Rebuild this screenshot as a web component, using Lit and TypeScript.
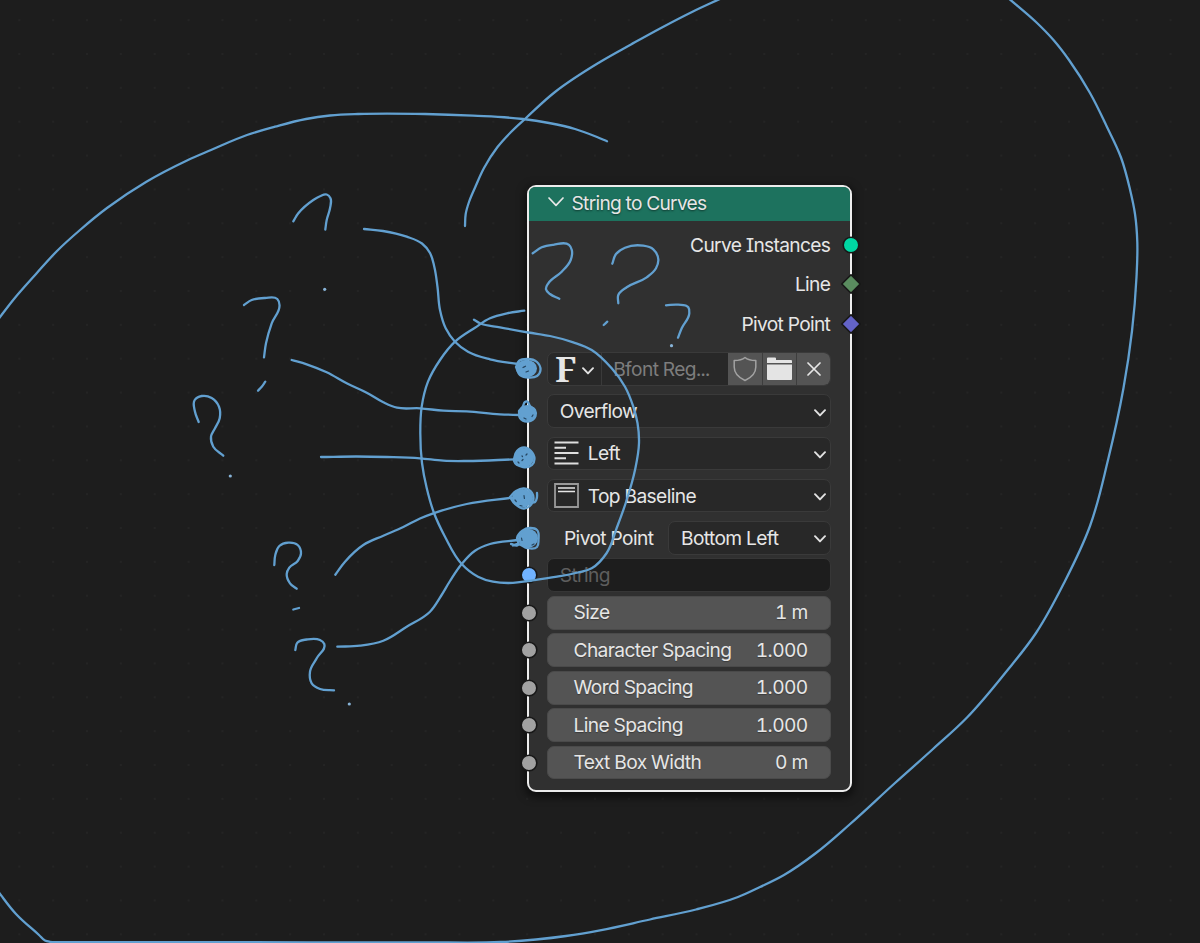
import { LitElement, html, svg, css } from "lit";
import { customElement, property } from "lit/decorators.js";

type Stroke = number[];

// Freehand annotation strokes as flat x,y lists, smoothed when rendered.
const STROKES: Stroke[] = [
  // sweeping outer lasso
  [-3,321, 14,299, 36,274, 57,251, 80,230, 107,208, 146,182, 187,160.5, 211,150, 247,135, 275,126.7, 306,119, 330,115.5, 358,114, 425,114, 473,115.7, 523,119, 549,123, 575,129, 597,137, 607,141.3],
  [465,226, 465.7,214, 469,202, 475.5,186.5, 484,168, 497.5,147, 511,132, 526,118, 555,92, 600,62, 631,44.5, 661,28, 692,12, 722,-2],
  [1007,-3, 1036,22, 1053.5,40, 1069,60, 1090,93, 1107,127, 1121,157.5, 1130,189.5, 1135,214, 1137.3,242, 1136.5,277, 1132,331, 1123.5,388, 1108,460, 1090,526, 1064,583, 1036,633, 1006,672, 967,717.5, 933,749, 895,783, 849,825, 816,853, 784,875, 760,887, 738,897, 696,909.5, 650,919.5, 600,930.3, 566,936, 536,939.5, 501,942, 421,942.3, 200,942.2, 80,942.2, 60,942.1, 50,941.8, 45,940.5, 39,935, 16,914, -3,890],
  // ring round the inputs
  [524.3,310.7, 507,313.3, 490,318.3, 475,327.7, 455,341.7, 440,360, 428,381.7, 421.7,406.7, 420.3,433, 422,463, 426.7,488, 434,513, 445,536.7, 461.7,564, 478,576.7, 493,581.7, 513,582.9, 528,581, 557,576.7, 578,572.5, 591.7,568.3, 606.7,553, 616.7,528, 626.7,500, 635,470, 639,443, 637.5,423, 633.3,406.7, 625,386.7, 611.7,368.3, 591.7,350, 573.3,342.3, 550,336, 528.3,332.5, 500,327.3, 480,323.3, 474,319.7],
  // leads to the missing sockets
  [364,229, 383,231, 406.7,236.7, 422,243.5, 430,253, 434.3,266.7, 437.5,287, 440,310, 445.7,328.3, 455,341.7, 468,351.7, 490,359.3, 518,364],
  [291.7,360, 306.7,364.3, 326.7,372.3, 346.7,383.3, 366.7,392.7, 383.3,402.3, 397,407.7, 420,408.3, 443.3,410.7, 466.7,411.3, 500,414.3, 520,415],
  [321,457, 356.7,456.5, 386.7,457, 420,458.3, 443.3,460.7, 466.7,461, 515,459.3],
  [335.3,574.7, 345,561.7, 363.3,545, 383.3,535.7, 403.3,527, 420,518.5, 433.3,513.3, 466.7,504, 512,497.7],
  [337.3,646.7, 360,645.7, 383.3,640.7, 406.7,626.7, 430,611.7, 441,596, 450,581, 461.7,564, 475,550.7, 490,544, 518,540],
  // question marks
  [293.3,221.3, 298.3,213.3, 313.3,200, 320,196.2, 326.7,194.5, 330.5,198.3, 330,208.3, 326.7,220, 325.3,229.5],
  [244,305, 251.7,300, 265,298, 277.3,299, 279.5,305, 271.7,323.3, 266,343.3, 264,357.3],
  [258,390.7, 261.5,387, 265.3,381.7],
  [198.7,422, 195,411.7, 194.7,400, 201.7,396, 211.7,398, 219,406.7, 219.7,418.3, 215,428.3, 211,436.7, 213.3,446.7, 223.3,455.7],
  [274.3,565, 275.3,555, 279.3,546, 288.3,542.7, 297.7,545, 301,553.3, 297.7,561, 289.3,567.7, 286.7,574, 290,583.3, 296.7,588.7],
  [293.3,609.5, 299,608],
  [295.3,650, 297.3,642.7, 306.7,639.5, 320,640, 324.3,644, 316.7,658.3, 310,671.7, 311.7,683.3, 320,689, 334,690.3],
  [532.7,253.3, 541.7,247.3, 553.3,244.8, 569,244.8, 571.8,250, 570.7,260, 561.7,271.7, 548.3,283.3, 546,289.3, 550,294, 559.3,298.7],
  [612.3,263.7, 616,254, 625,247.7, 643.3,245.7, 653.3,249.3, 658.3,259.3, 656,268.3, 646.7,277.3, 626.7,287.3, 618.3,295, 618.3,303.3],
  [603.7,325, 607.3,321.7],
  [666,305.3, 678.3,304.7, 688.3,307.3, 689.3,313.3, 681.7,328.3, 678,337.7],
];

// Loose loops around each scribbled socket.
const SCRIBBLES: Stroke[] = [
  [516,367, 519,361, 527,359, 537,362, 540.5,370, 537,376, 529,377.5, 520,375, 516,367],
  [519,411, 523,406, 525,402, 527,401.5, 530,406, 535,410, 535.5,416, 528,421.5, 520,418, 519,411],
  [514,459, 517,451, 524,447.5, 531,451, 534.5,459, 532,465, 523,467, 514,461, 514,459],
  [510,497, 516,491, 524,488.5, 532,493, 533,501, 524,508.5, 515,504, 510,497],
  [528,502, 535,502, 537,497, 537,493],
  [511,544, 518,545, 517,538, 522,531, 530,528, 537,530, 538.5,540, 537,547, 527,548, 518,544, 513,545.5],
];
const BLOBS = [
  [526.5, 368.5, 10.5, 8.8], [527.3, 413, 8.6, 8], [524, 457.8, 10, 9.5],
  [522.5, 498.3, 10.5, 9.2], [528, 538.3, 10, 9.5],
];
const GAPS: Stroke[] = [
  [523,367.5, 525.5,366.2], [526,372, 528.5,371], [524,418, 526,419], [532,416.5, 533,415],
  [518,462, 519,463], [522,460.5, 523,459.5], [526,455, 527,454], [522,456, 522.5,456.5],
  [515,500, 516.3,501.5], [524,495.5, 524.4,498.5], [520,505.5, 522,506],
  [521.5,538, 522,540.5], [534,544, 532,545],
];
const DOTS = [[324.7, 289.3], [230.3, 476], [349.3, 704], [671.5, 345.7]];

function smooth(p: Stroke): string {
  const n = p.length / 2;
  const at = (i: number) => {
    const k = Math.max(0, Math.min(n - 1, i));
    return [p[2 * k], p[2 * k + 1]];
  };
  // Unit tangent at a point; the shorter neighbouring chord counts for more.
  const tangent = (i: number) => {
    const [a, b, c] = [at(i - 1), at(i), at(i + 1)];
    const l1 = Math.hypot(b[0] - a[0], b[1] - a[1]);
    const l2 = Math.hypot(c[0] - b[0], c[1] - b[1]);
    const w1 = l1 ? Math.sqrt(l2 || 1) / l1 : 0;
    const w2 = l2 ? Math.sqrt(l1 || 1) / l2 : 0;
    const t = [0, 1].map((k) => (b[k] - a[k]) * w1 + (c[k] - b[k]) * w2);
    const m = Math.hypot(t[0], t[1]) || 1;
    return [t[0] / m, t[1] / m];
  };
  let d = `M${p[0]} ${p[1]}`;
  for (let i = 0; i < n - 1; i++) {
    const b = at(i), c = at(i + 1);
    const len = Math.hypot(c[0] - b[0], c[1] - b[1]) * 0.36;
    const t1 = tangent(i), t2 = tangent(i + 1);
    d += `C${b[0] + t1[0] * len} ${b[1] + t1[1] * len} ${c[0] - t2[0] * len} ${c[1] - t2[1] * len} ${c[0]} ${c[1]}`;
  }
  return d;
}

const chevron = html`<svg class="chevron" width="12" height="8" viewBox="0 0 12 8"><path d="M1 1.2 6 6.4l5-5.2" fill="none" stroke="#e2e2e2" stroke-width="1.9" stroke-linecap="round" stroke-linejoin="round"/></svg>`;

@customElement("node-socket")
class NodeSocket extends LitElement {
  @property() kind = "value";
  static styles = css`
    :host { position: absolute; top: 50%; width: 20px; height: 20px; transform: translate(-50%, -50%); }
    svg { display: block; }
    .value { fill: #a1a1a1; }
    .string { fill: #70b2ff; }
    .geometry { fill: #00d6a3; }
    .line { fill: #5a8c5f; }
    .vector { fill: #6363c7; }
    .edge { stroke: #171717; stroke-width: 1.6; }
  `;
  render() {
    const diamond = this.kind === "line" || this.kind === "vector";
    return html`<svg width="20" height="20" viewBox="0 0 20 20">
      ${diamond
        ? svg`<path class="edge ${this.kind}" d="M10 .8 19.2 10 10 19.2.8 10Z"/>`
        : svg`<circle class="edge ${this.kind}" cx="10" cy="10" r="7.8"/>`}
    </svg>`;
  }
}

@customElement("app-root")
class AppRoot extends LitElement {
  static styles = css`
    :host {
      display: block; position: relative; width: 1200px; height: 943px; overflow: hidden;
      box-sizing: border-box;
      background-color: #1d1d1d;
      background-image: radial-gradient(circle, #242424 0.8px, transparent 1.4px);
      background-size: 33.86px 33.86px;
      background-position: 2.4px 3.2px;
      font: 400 19.2px/24px Inter, "Liberation Sans", sans-serif;
      font-feature-settings: "cv08", "tnum";
      letter-spacing: -0.62px;
      color: #e6e6e6;
    }
    * { box-sizing: border-box; }
    .node {
      position: absolute; left: 527px; top: 185px; width: 325px; height: 607px;
      border: 2px solid #ececec; border-radius: 9px; background: #303030;
      box-shadow: 0 3px 9px 2px rgba(0,0,0,.55);
      display: flex; flex-direction: column;
    }
    .head {
      height: 33.7px; flex: none; display: flex; align-items: center; gap: 7.5px;
      padding: 0 0 1px 19px; background: #1d725e; border-radius: 6px 6px 0 0;
      text-shadow: 0 1px 2px rgba(0,0,0,.5); letter-spacing: -0.71px;
    }
    .head svg { margin-bottom: 2px; }
    .outputs { flex: none; display: flex; flex-direction: column; padding-top: 4.9px; letter-spacing: -0.68px; }
    .out { position: relative; height: 39.2px; display: flex; align-items: center; justify-content: flex-end; padding-right: 19.8px; }
    .out node-socket { left: 321.7px; }
    .props { display: flex; flex-direction: column; gap: 8.6px; padding: 9.1px 18.9px 0 17.7px; }
    .box {
      height: 33.6px; display: flex; align-items: center; background: #282828;
      border: 1px solid #3a3a3a; border-radius: 7px; padding: 0 4px 0 12px;
    }
    .box .chevron { margin-left: auto; margin-top: 3px; }
    .icon { padding-left: 6px; }
    .icon .label { padding-left: 9px; }
    .font { padding: 0; }
    .pick { width: 54px; align-self: stretch; border-right: 1px solid #3a3a3a; display: flex; align-items: center; padding-left: 7.5px; }
    .glyph { font: 700 34px/40px "Noto Serif", "Liberation Serif", serif; width: 22px; margin: -5px 0 -4px; }
    .pick .chevron { margin-left: 5px; }
    .name { flex: 1; padding-left: 11.5px; color: #7d7d7d; }
    .btn { width: 34.4px; align-self: stretch; background: #545454; border-right: 1px solid #3d3d3d; display: flex; align-items: center; justify-content: center; }
    .btn:last-child { border: 0; width: 33px; border-radius: 0 6px 6px 0; }
    .pivot { display: flex; align-items: center; }
    .pivot > .label { width: 121.3px; padding-left: 17.3px; }
    .pivot > .box { flex: 1; }
    .inputs { display: flex; flex-direction: column; gap: 3.9px; padding: 3.9px 18.9px 0 17.7px; }
    .input { position: relative; }
    .input node-socket { left: -17.7px; }
    .text { background: #1d1d1d; border-color: #363636; color: #5e5e5e; }
    .num { background: #545454; border-color: #4a4a4a; padding: 0 22.5px 1px 25.8px; justify-content: space-between; text-shadow: 0 1px 1px rgba(0,0,0,.3); }
    .ink { position: absolute; left: 0; top: 0; }
    .line { fill: none; stroke: #62a0d0; stroke-width: 2.3; stroke-linecap: round; stroke-linejoin: round; }
    .blob { fill: #62a0d0; }
    .gap { fill: none; stroke: #254560; stroke-width: 1.2; stroke-linecap: round; }
    .dot { fill: #88b4d8; }
  `;

  private number(name: string, value: string) {
    return html`<div class="input"><node-socket kind="value"></node-socket>
      <div class="box num"><span class="label">${name}</span><span class="label">${value}</span></div></div>`;
  }

  render() {
    return html`
      <section class="node">
        <header class="head">
          <svg width="16" height="10" viewBox="0 0 16 10"><path d="M1 1l7 7.4L15 1" fill="none" stroke="#e8e8e8" stroke-width="1.7" stroke-linecap="round" stroke-linejoin="round"/></svg>
          <span>String to Curves</span>
        </header>
        <div class="outputs">
          <div class="out">Curve Instances<node-socket kind="geometry"></node-socket></div>
          <div class="out">Line<node-socket kind="line"></node-socket></div>
          <div class="out">Pivot Point<node-socket kind="vector"></node-socket></div>
        </div>
        <div class="props">
          <div class="box font">
            <div class="pick"><span class="glyph">F</span>${chevron}</div>
            <span class="label name">Bfont Reg...</span>
            <div class="btn"><svg width="24" height="26" viewBox="0 0 24 26"><path d="M12 1.5C9.5 3.6 5 4.5 1.2 4.5V11c0 6 4.3 10.500 10.800 13.500C18.500 21.500 22.800 17 22.800 11V4.500C19 4.500 14.500 3.600 12 1.500Z" fill="none" stroke="#a2a2a2" stroke-width="1.5" stroke-linejoin="round"/></svg></div>
            <div class="btn"><svg width="25" height="24" viewBox="0 0 25 24"><path d="M0 1.500Q0 .5 1 .5H8Q9 .5 9 1.500V3H24Q25 3 25 4V6H0ZM0 7.500H25V22Q25 23 24 23H1Q0 23 0 22Z" fill="#e4e4e4"/></svg></div>
            <div class="btn"><svg width="14" height="14" viewBox="0 0 14 14"><path d="M1 1l12 12M13 1 1 13" stroke="#e6e6e6" stroke-width="1.7" stroke-linecap="round"/></svg></div>
          </div>
          <div class="box"><span class="label">Overflow</span>${chevron}</div>
          <div class="box icon">
            <svg width="25" height="24" viewBox="0 0 25 24"><path d="M.5 1.500h24M.5 6.800h11.500M.5 12h24M.5 17.200h11.500M.5 22.500h24" stroke="#dedede" stroke-width="1.900"/></svg>
            <span class="label">Left</span>${chevron}
          </div>
          <div class="box icon">
            <svg width="25" height="25" viewBox="0 0 25 25"><path d="M1 1h23v23H1Z" fill="none" stroke="#999" stroke-width="1.800"/><path d="M4 5h17M4 8.500h17" stroke="#e6e6e6" stroke-width="1.700"/></svg>
            <span class="label">Top Baseline</span>${chevron}
          </div>
          <div class="pivot"><span class="label">Pivot Point</span><div class="box"><span class="label">Bottom Left</span>${chevron}</div></div>
        </div>
        <div class="inputs">
          <div class="input"><node-socket kind="string"></node-socket><div class="box text"><span class="label">String</span></div></div>
          ${this.number("Size", "1 m")}
          ${this.number("Character Spacing", "1.000")}
          ${this.number("Word Spacing", "1.000")}
          ${this.number("Line Spacing", "1.000")}
          ${this.number("Text Box Width", "0 m")}
        </div>
      </section>
      <svg class="ink" width="1200" height="943" viewBox="0 0 1200 943">
        ${STROKES.map((s) => svg`<path class="line" d=${smooth(s)}/>`)}
        ${BLOBS.map((b) => svg`<ellipse class="blob" cx=${b[0]} cy=${b[1]} rx=${b[2]} ry=${b[3]}/>`)}
        ${SCRIBBLES.map((s) => svg`<path class="line" d=${smooth(s)}/>`)}
        ${GAPS.map((s) => svg`<path class="gap" d=${smooth(s)}/>`)}
        ${DOTS.map((d) => svg`<circle class="dot" cx=${d[0]} cy=${d[1]} r="1.600"/>`)}
      </svg>`;
  }
}
